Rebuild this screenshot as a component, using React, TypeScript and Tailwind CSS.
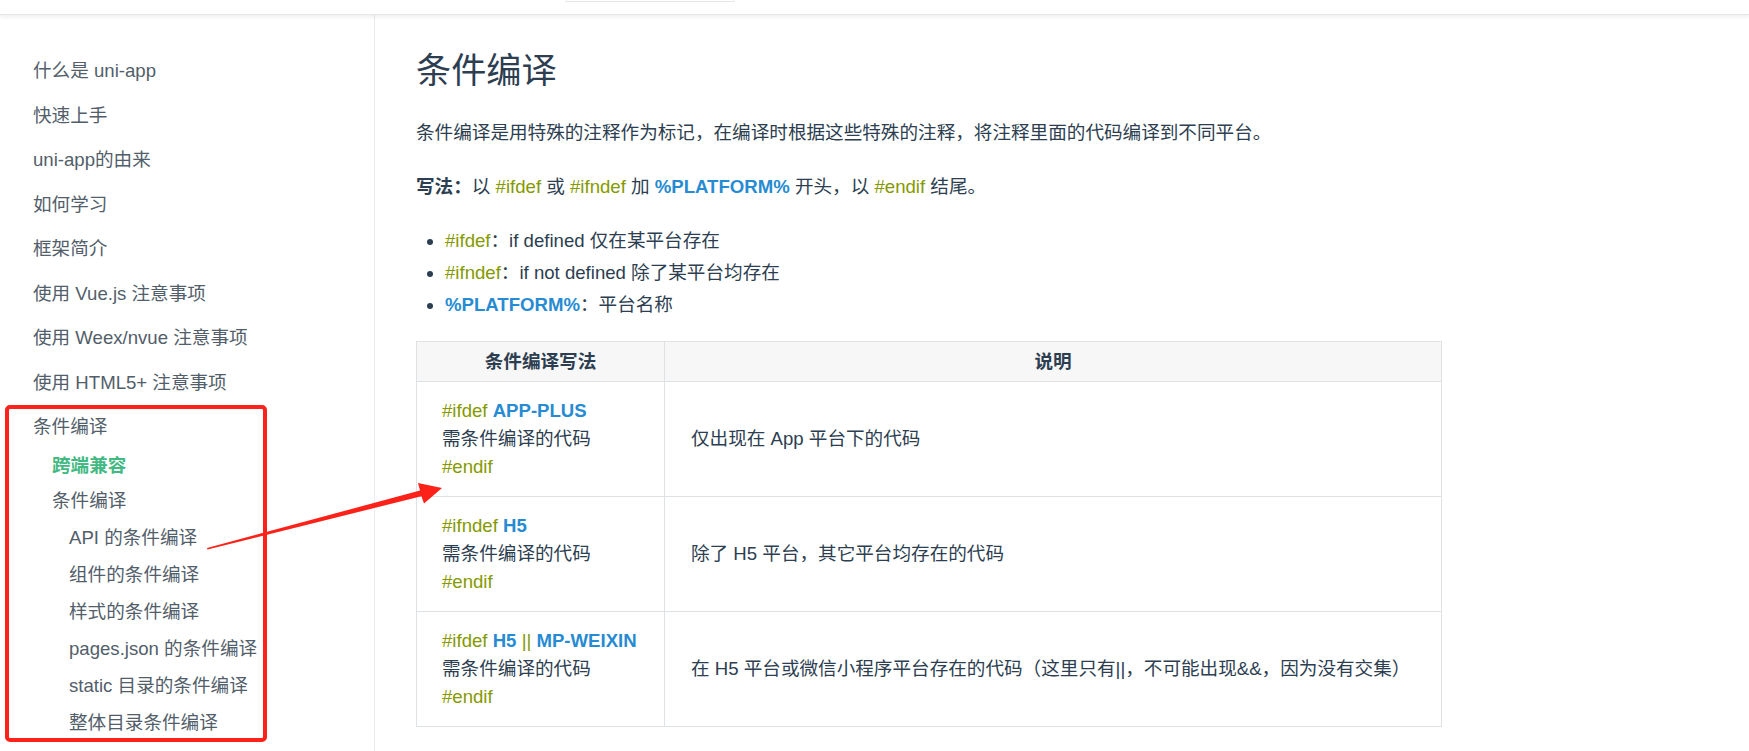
import React from "react";

const O = ({ children }: { children: React.ReactNode }) => (
  <span className="text-[#859900]">{children}</span>
);
const B = ({ children }: { children: React.ReactNode }) => (
  <span className="text-[#268bd2] font-bold">{children}</span>
);

const topItems = [
  "什么是 uni-app",
  "快速上手",
  "uni-app的由来",
  "如何学习",
  "框架简介",
  "使用 Vue.js 注意事项",
  "使用 Weex/nvue 注意事项",
  "使用 HTML5+ 注意事项",
  "条件编译",
];

const level3 = [
  "API 的条件编译",
  "组件的条件编译",
  "样式的条件编译",
  "pages.json 的条件编译",
  "static 目录的条件编译",
  "整体目录条件编译",
];

const rows: { code: React.ReactNode; desc: string }[] = [
  {
    code: (
      <>
        <O>#ifdef</O> <B>APP-PLUS</B>
      </>
    ),
    desc: "仅出现在 App 平台下的代码",
  },
  {
    code: (
      <>
        <O>#ifndef</O> <B>H5</B>
      </>
    ),
    desc: "除了 H5 平台，其它平台均存在的代码",
  },
  {
    code: (
      <>
        <O>#ifdef</O> <B>H5</B> <O>||</O> <B>MP-WEIXIN</B>
      </>
    ),
    desc: "在 H5 平台或微信小程序平台存在的代码（这里只有||，不可能出现&&，因为没有交集）",
  },
];

export default function App() {
  return (
    <div className="relative w-[1749px] h-[751px] overflow-hidden bg-white text-[#2c3e50] font-['Liberation_Sans','Noto_Sans_CJK_SC',sans-serif]">
      {/* top navbar (cut off) */}
      <div className="relative z-10 h-[15px] bg-white border-b border-[#e4e6ea] shadow-[0_2px_4px_rgba(0,0,0,0.07)] pl-[565px]">
        <div className="w-[170px] h-[2px] border-b border-x border-[#e6e6e6] rounded-b-[2px]" />
      </div>

      <div className="flex h-[736px]">
        {/* sidebar */}
        <aside className="w-[375px] shrink-0 border-r border-[#eaecef] pt-[34px] text-[18.6px] text-[#525e6a]">
          {topItems.map((t) => (
            <div key={t} className="h-[44.5px] flex items-center pl-[33px] whitespace-nowrap">
              {t}
            </div>
          ))}
          <div className="h-[32px] flex items-center pl-[52px] font-bold text-[#42b983]">跨端兼容</div>
          <div className="h-[38px] flex items-center pl-[52px]">条件编译</div>
          {level3.map((t) => (
            <div key={t} className="h-[37px] flex items-center pl-[69px] whitespace-nowrap">
              {t}
            </div>
          ))}
        </aside>

        {/* main content */}
        <main className="flex-1 pl-[41px] text-[18.6px]">
          <h1 className="mt-[34px] text-[35.2px] leading-[44px] font-normal">条件编译</h1>
          <p className="mt-[24px] leading-[31.6px] whitespace-nowrap">
            条件编译是用特殊的注释作为标记，在编译时根据这些特殊的注释，将注释里面的代码编译到不同平台。
          </p>
          <p className="mt-[22.4px] leading-[31.6px] whitespace-nowrap">
            <strong className="font-bold">写法：</strong>以 <O>#ifdef</O> 或 <O>#ifndef</O> 加 <B>%PLATFORM%</B> 开头，以{" "}
            <O>#endif</O> 结尾。
          </p>
          <ul className="mt-[22.4px] pl-[29px] list-disc leading-[32px]">
            <li>
              <O>#ifdef</O>：if defined 仅在某平台存在
            </li>
            <li>
              <O>#ifndef</O>：if not defined 除了某平台均存在
            </li>
            <li>
              <B>%PLATFORM%</B>：平台名称
            </li>
          </ul>

          <table className="mt-[20px] w-[1026px] border-collapse table-fixed">
            <colgroup>
              <col className="w-[248px]" />
              <col />
            </colgroup>
            <thead>
              <tr className="bg-[#f7f7f7]">
                <th className="h-[40px] border border-[#dfe2e5] font-bold text-center p-0">条件编译写法</th>
                <th className="h-[40px] border border-[#dfe2e5] font-bold text-center p-0">说明</th>
              </tr>
            </thead>
            <tbody>
              {rows.map((r, i) => (
                <tr key={i}>
                  <td className="h-[115px] border border-[#dfe2e5] pl-[25px] pr-2 py-0 align-middle leading-[27.7px] whitespace-nowrap">
                    <div>{r.code}</div>
                    <div>需条件编译的代码</div>
                    <div>
                      <O>#endif</O>
                    </div>
                  </td>
                  <td className="h-[115px] border border-[#dfe2e5] pl-[26px] pr-2 py-0 align-middle whitespace-nowrap">
                    {r.desc}
                  </td>
                </tr>
              ))}
            </tbody>
          </table>
        </main>
      </div>

      {/* annotation: red box */}
      <div className="absolute left-[5px] top-[405px] w-[262px] h-[337px] border-[4px] border-[#fd2219] rounded-[5px] pointer-events-none" />

      {/* annotation: arrow */}
      <svg className="absolute left-0 top-0 pointer-events-none" width="1749" height="751" viewBox="0 0 1749 751">
        <polygon
          points="207,548 420,490.5 418,483 442,488 424,503.5 421.4,496.3 207.5,549.5"
          fill="#fd2219"
        />
      </svg>
    </div>
  );
}
